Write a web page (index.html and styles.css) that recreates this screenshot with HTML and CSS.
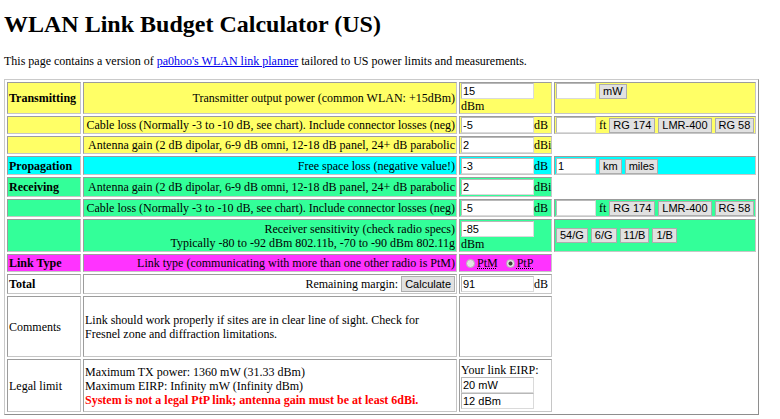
FILE: index.html
```html
<!DOCTYPE html>
<html>
<head>
<meta charset="utf-8">
<title>WLAN Link Budget Calculator (US)</title>
<link rel="stylesheet" href="styles.css">
</head>
<body>
<h1 class="title">WLAN Link Budget Calculator (US)</h1>
<p class="intro">This page contains a version of <a href="#" class="link">pa0hoo's WLAN link planner</a> tailored to US power limits and measurements.</p>
<form class="calc">
<table class="budget">
<colgroup><col class="c1"><col class="c2"><col class="c3"><col class="c4"></colgroup>
<tr class="tx h32">
<td class="sect">Transmitting</td>
<td class="desc">Transmitter output power (common WLAN: +15dBm)</td>
<td class="val"><input class="num" value="15"><br>dBm</td>
<td class="extra top"><input class="small"> <button type="button" class="btn">mW</button></td>
</tr>
<tr class="tx h18">
<td class="sect"></td>
<td class="desc">Cable loss (Normally -3 to -10 dB, see chart). Include connector losses (neg)</td>
<td class="val"><input class="num" value="-5">dB</td>
<td class="extra"><input class="small"> ft <button type="button" class="btn">RG 174</button> <button type="button" class="btn">LMR-400</button> <button type="button" class="btn">RG 58</button></td>
</tr>
<tr class="tx h18">
<td class="sect"></td>
<td class="desc">Antenna gain (2 dB dipolar, 6-9 dB omni, 12-18 dB panel, 24+ dB parabolic</td>
<td class="val"><input class="num" value="2">dBi</td>
</tr>
<tr class="prop h19">
<td class="sect"><b>Propagation</b></td>
<td class="desc">Free space loss (negative value!)</td>
<td class="val"><input class="num" value="-3">dB</td>
<td class="extra"><input class="small" value="1"> <button type="button" class="btn">km</button> <button type="button" class="btn">miles</button></td>
</tr>
<tr class="rx h20">
<td class="sect"><b>Receiving</b></td>
<td class="desc">Antenna gain (2 dB dipolar, 6-9 dB omni, 12-18 dB panel, 24+ dB parabolic</td>
<td class="val"><input class="num" value="2">dBi</td>
</tr>
<tr class="rx h18">
<td class="sect"></td>
<td class="desc">Cable loss (Normally -3 to -10 dB, see chart). Include connector losses (neg)</td>
<td class="val"><input class="num" value="-5">dB</td>
<td class="extra"><input class="small"> ft <button type="button" class="btn">RG 174</button> <button type="button" class="btn">LMR-400</button> <button type="button" class="btn">RG 58</button></td>
</tr>
<tr class="rx h33">
<td class="sect"></td>
<td class="desc">Receiver sensitivity (check radio specs)<br>Typically -80 to -92 dBm 802.11b, -70 to -90 dBm 802.11g</td>
<td class="val"><input class="num" value="-85"><br>dBm</td>
<td class="extra"> <button type="button" class="btn">54/G</button> <button type="button" class="btn">6/G</button> <button type="button" class="btn">11/B</button> <button type="button" class="btn">1/B</button></td>
</tr>
<tr class="link-type h18">
<td class="sect"><b>Link Type</b></td>
<td class="desc">Link type (communicating with more than one other radio is PtM)</td>
<td class="val"><input type="radio" name="lt" class="radio" id="ptm"><label for="ptm" class="opt">PtM</label> <input type="radio" name="lt" class="radio" id="ptp" checked><label for="ptp" class="opt">PtP</label></td>
</tr>
<tr class="plain h20">
<td class="sect"><b>Total</b></td>
<td class="desc">Remaining margin: <button type="button" class="btn btn-calc">Calculate</button></td>
<td class="val"><input class="num" value="91">dB</td>
</tr>
<tr class="plain h61">
<td class="sect">Comments</td>
<td class="note">Link should work properly if sites are in clear line of sight. Check for<br>Fresnel zone and diffraction limitations.</td>
<td class="val"></td>
</tr>
<tr class="plain h53">
<td class="sect">Legal limit</td>
<td class="note">Maximum TX power: 1360 mW (31.33 dBm)<br>Maximum EIRP: Infinity mW (Infinity dBm)<br><span class="warn">System is not a legal PtP link; antenna gain must be at least 6dBi.</span></td>
<td class="val">Your link EIRP:<br><input class="num stack" value="20 mW"><br><input class="num stack" value="12 dBm"></td>
</tr>
</table>
</form>
</body>
</html>
```
FILE: styles.css
```css
html {
  background: #fff;
}
body {
  margin: 0 0 0 4px;
  font-family: "Liberation Serif", "Times New Roman", serif;
  font-size: 12px;
  color: #000;
}
.title {
  font-size: 24px;
  line-height: 28px;
  font-weight: bold;
  margin: 10px 0 16px;
}
.intro {
  line-height: 14px;
  margin: 0 0 11px;
}
.link {
  color: #0000ee;
  text-decoration: underline;
}
.calc {
  margin: 0;
}
.budget {
  width: 755px;
  table-layout: fixed;
  border-collapse: separate;
  border-spacing: 2px;
  border: 1px solid;
  border-color: #cacaca #8e8e8e #8e8e8e #cacaca;
  font-size: 12px;
  line-height: 14px;
}
.c1 { width: 74px; }
.c2 { width: 374px; }
.c3 { width: 93px; }
.c4 { width: 202px; }

.budget td {
  border: 1px solid;
  border-color: #9c9c9c #c6c6c6 #c6c6c6 #9c9c9c;
  padding: 0 1px;
  vertical-align: middle;
  white-space: nowrap;
  overflow: visible;
}
.h18 { height: 18px; }
.h19 { height: 19px; }
.h20 { height: 20px; }
.h32 { height: 32px; }
.h33 { height: 33px; }
.h53 { height: 53px; }
.h61 { height: 61px; }

.tx td { background: #ffff66; }
.prop td { background: #00ffff; }
.rx td { background: #33ff99; }
.link-type td { background: #ff33ff; }
.plain td { background: #fff; }

.sect {
  text-align: left;
}
.tx .sect:first-child:not(:empty) {
  font-weight: bold;
}
.desc {
  text-align: right;
}
.note {
  text-align: left;
}
.val {
  text-align: left;
}
.budget td.top {
  vertical-align: top;
}

.num,
.small {
  box-sizing: border-box;
  height: 16px;
  margin: 0;
  padding: 0 1px;
  border: 1px solid;
  border-color: #b8b8b8 #dadada #dadada #b8b8b8;
  background: #fff;
  color: #000;
  font: 11px "Liberation Sans", Arial, sans-serif;
}
.num { width: 73px; }
.small { width: 40px; }

.btn {
  box-sizing: border-box;
  height: 15px;
  margin: 0;
  padding: 0 3px;
  border: 1px solid #adadad;
  border-radius: 0;
  background: #e1e1e1;
  color: #000;
  font: 11px "Liberation Sans", Arial, sans-serif;
  line-height: 13px;
}
.btn-calc {
  height: 16px;
}

.radio {
  -webkit-appearance: none;
  appearance: none;
  box-sizing: border-box;
  width: 9px;
  height: 9px;
  margin: 0 2px 0 5px;
  border: 1px solid #b4b4b4;
  border-radius: 50%;
  background: #e4e4e4;
  vertical-align: -1px;
}
.radio:checked {
  background: radial-gradient(circle, #3c3c3c 0, #3c3c3c 1.6px, #e4e4e4 2.4px);
}
.opt {
  text-decoration: underline dotted;
}

.warn {
  color: #ff0000;
  font-weight: bold;
}
```
